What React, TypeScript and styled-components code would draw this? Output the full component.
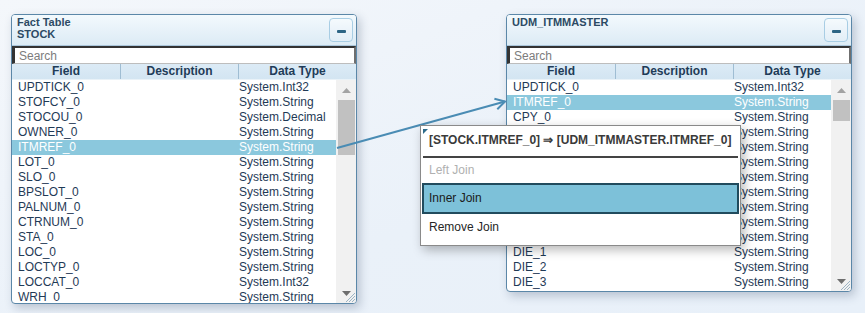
import React from "react";
import styled, { createGlobalStyle } from "styled-components";

const Global = createGlobalStyle`
  html, body { margin: 0; padding: 0; }
  body {
    background: #edf3fa;
    font-family: "Liberation Sans", Arial, sans-serif;
  }
`;

const Canvas = styled.div`
  position: relative;
  width: 865px;
  height: 313px;
  overflow: hidden;
  background: linear-gradient(160deg, #f4f7fb 0%, #eaf1f9 60%, #e8f0f9 100%);
`;

const Panel = styled.div<{ $x: number; $y: number; $h: number }>`
  position: absolute;
  left: ${(p) => p.$x}px;
  top: ${(p) => p.$y}px;
  width: 346px;
  height: ${(p) => p.$h}px;
  box-sizing: border-box;
  border: 1px solid #5b87a8;
  border-radius: 4px;
  background: #fff;
  box-shadow: 3px 4px 10px rgba(40, 60, 90, 0.25);
  display: flex;
  flex-direction: column;
  overflow: hidden;
`;

const Header = styled.div`
  height: 31px;
  box-sizing: border-box;
  border-bottom: 1px solid #a9c5da;
  background: linear-gradient(180deg, #f3f9fd 0%, #dcebf5 100%);
  display: flex;
  align-items: center;
  justify-content: space-between;
  padding: 0 3px 0 5px;
`;

const Title = styled.div`
  align-self: flex-start;
  font-size: 11px;
  font-weight: bold;
  line-height: 12px;
  color: #2c4a64;
  padding-top: 1px;
`;

const MinButton = styled.div`
  width: 24px;
  height: 24px;
  box-sizing: border-box;
  border: 1px solid #a8cde4;
  border-radius: 4px;
  background: linear-gradient(180deg, #f5fafd 0%, #e2eef7 100%);
  display: flex;
  align-items: flex-end;
  justify-content: center;
  padding-bottom: 8px;
`;

const MinBar = styled.div`
  width: 9px;
  height: 3px;
  border-radius: 1px;
  background: #2d6585;
`;

const Search = styled.input`
  display: block;
  width: 100%;
  height: 18px;
  box-sizing: border-box;
  margin: 0;
  border-style: solid;
  border-width: 2px 2px 1px 3px;
  border-color: #333 #6f6f6f #bdbdbd #333;
  padding: 0 0 0 4px;
  font-family: "Liberation Sans", Arial, sans-serif;
  font-size: 12px;
  color: #333;
  background: #fff;
  outline: none;
  &::placeholder { color: #7c7c7c; }
`;

const ColHeader = styled.div`
  height: 16px;
  box-sizing: border-box;
  display: grid;
  grid-template-columns: 108px 118px 1fr;
  background: linear-gradient(180deg, #dcebf6 0%, #d3e5f2 100%);
  border-bottom: 1px solid #e9f2f8;
`;

const ColCell = styled.div<{ $divider?: boolean }>`
  font-size: 12px;
  font-weight: bold;
  line-height: 15px;
  color: #1f3c58;
  text-align: center;
  border-left: ${(p) => (p.$divider ? "1px solid #9fbdd3" : "none")};
`;

const Body = styled.div`
  flex: 1;
  display: flex;
  min-height: 0;
`;

const RowList = styled.div`
  flex: 1;
  overflow: hidden;
`;

const Row = styled.div<{ $sel?: boolean }>`
  height: 15px;
  display: grid;
  grid-template-columns: 108px 119px 1fr;
  font-size: 12px;
  line-height: 15px;
  white-space: nowrap;
  color: ${(p) => (p.$sel ? "#ffffff" : "#1f3a56")};
  background: ${(p) => (p.$sel ? "#8bc8dd" : "transparent")};
`;

const FieldCell = styled.div`
  padding-left: 6px;
`;

const TypeCell = styled.div``;

const Scroll = styled.div`
  width: 20px;
  background: #f1f1f1;
  display: flex;
  flex-direction: column;
  position: relative;
`;

const ArrowBox = styled.div`
  height: 20px;
  display: flex;
  align-items: center;
  justify-content: center;
  padding-left: 1px;
`;

const Thumb = styled.div<{ $h: number }>`
  height: ${(p) => p.$h}px;
  margin: 0 1px 0 2px;
  background: #c1c1c1;
`;

const Spacer = styled.div`
  flex: 1;
`;

const Grip = styled.svg`
  position: absolute;
  right: 1px;
  bottom: 1px;
`;

const Overlay = styled.svg`
  position: absolute;
  left: 0;
  top: 0;
  pointer-events: none;
`;

const Menu = styled.div`
  position: absolute;
  left: 420px;
  top: 125px;
  width: 321px;
  height: 121px;
  box-sizing: border-box;
  border: 1px solid #8a8a8a;
  background: #fff;
  box-shadow: 3px 4px 10px rgba(0, 0, 0, 0.28);
  display: flex;
  flex-direction: column;
`;

const Corner = styled.svg`
  position: absolute;
  left: 2px;
  top: 3px;
`;

const MenuTitle = styled.div`
  padding: 7px 8px 8px 8px;
  font-size: 12px;
  font-weight: bold;
  line-height: 15px;
  color: #3a3a3a;
  white-space: nowrap;
`;

const Sep = styled.div`
  height: 2px;
  margin: 0 2px;
  background: #444;
`;

const MenuItem = styled.div<{ $h: number; $disabled?: boolean }>`
  height: ${(p) => p.$h}px;
  display: flex;
  align-items: center;
  padding-left: 8px;
  font-size: 12px;
  line-height: 15px;
  color: ${(p) => (p.$disabled ? "#b0b0b0" : "#262626")};
`;

const MenuActive = styled.div`
  height: 31px;
  box-sizing: border-box;
  margin: 0 1px;
  border: 2px solid #214b5d;
  background: #7dc1d9;
  display: flex;
  align-items: center;
  padding-left: 5px;
  font-size: 12px;
  line-height: 15px;
  color: #1b1b1b;
`;

type RowData = [string, string];

const leftRows: RowData[] = [
  ["UPDTICK_0", "System.Int32"],
  ["STOFCY_0", "System.String"],
  ["STOCOU_0", "System.Decimal"],
  ["OWNER_0", "System.String"],
  ["ITMREF_0", "System.String"],
  ["LOT_0", "System.String"],
  ["SLO_0", "System.String"],
  ["BPSLOT_0", "System.String"],
  ["PALNUM_0", "System.String"],
  ["CTRNUM_0", "System.String"],
  ["STA_0", "System.String"],
  ["LOC_0", "System.String"],
  ["LOCTYP_0", "System.String"],
  ["LOCCAT_0", "System.Int32"],
  ["WRH_0", "System.String"],
];

const rightRows: RowData[] = [
  ["UPDTICK_0", "System.Int32"],
  ["ITMREF_0", "System.String"],
  ["CPY_0", "System.String"],
  ["TCLCOD_0", "System.String"],
  ["ITMDES1_0", "System.String"],
  ["ITMDES2_0", "System.String"],
  ["ITMDES3_0", "System.String"],
  ["SEAKEY_0", "System.String"],
  ["ITMSTA_0", "System.String"],
  ["EANCOD_0", "System.String"],
  ["DIE_0", "System.String"],
  ["DIE_1", "System.String"],
  ["DIE_2", "System.String"],
  ["DIE_3", "System.String"],
];

const UpTri = () => (
  <svg width="9" height="5" viewBox="0 0 9 5">
    <polygon points="0,5 9,5 4.5,0" fill="#a3a3a3" />
  </svg>
);

const DownTri = () => (
  <svg width="9" height="5" viewBox="0 0 9 5">
    <polygon points="0,0 9,0 4.5,5" fill="#6e6e6e" />
  </svg>
);

const ResizeGrip = () => (
  <Grip width="10" height="10" viewBox="0 0 10 10">
    <line x1="10" y1="1" x2="1" y2="10" stroke="#9db4c4" strokeWidth="1" />
    <line x1="10" y1="4" x2="4" y2="10" stroke="#9db4c4" strokeWidth="1" />
    <line x1="10" y1="7" x2="7" y2="10" stroke="#9db4c4" strokeWidth="1" />
  </Grip>
);

type TableProps = {
  x: number;
  y: number;
  h: number;
  title: React.ReactNode;
  rows: RowData[];
  selected: number;
  thumb: number;
};

const TablePanel = ({ x, y, h, title, rows, selected, thumb }: TableProps) => (
  <Panel $x={x} $y={y} $h={h}>
    <Header>
      <Title>{title}</Title>
      <MinButton>
        <MinBar />
      </MinButton>
    </Header>
    <Search placeholder="Search" readOnly />
    <ColHeader>
      <ColCell>Field</ColCell>
      <ColCell $divider>Description</ColCell>
      <ColCell $divider>Data Type</ColCell>
    </ColHeader>
    <Body>
      <RowList>
        {rows.map(([f, t], i) => (
          <Row key={f + i} $sel={i === selected}>
            <FieldCell>{f}</FieldCell>
            <div />
            <TypeCell>{t}</TypeCell>
          </Row>
        ))}
      </RowList>
      <Scroll>
        <ArrowBox>
          <UpTri />
        </ArrowBox>
        <Thumb $h={thumb} />
        <Spacer />
        <ArrowBox>
          <DownTri />
        </ArrowBox>
        <ResizeGrip />
      </Scroll>
    </Body>
  </Panel>
);

export default function App() {
  return (
    <>
      <Global />
      <Canvas>
        <TablePanel
          x={11}
          y={14}
          h={290}
          title={
            <>
              Fact Table
              <br />
              STOCK
            </>
          }
          rows={leftRows}
          selected={4}
          thumb={55}
        />
        <TablePanel
          x={506}
          y={14}
          h={278}
          title="UDM_ITMMASTER"
          rows={rightRows}
          selected={1}
          thumb={21}
        />
        <Overlay width="865" height="313" viewBox="0 0 865 313">
          <line x1="337" y1="148" x2="505" y2="101.5" stroke="#4a8cb4" strokeWidth="2" />
          <polyline
            points="494.4,98.7 505,101.5 497.3,109.3"
            fill="none"
            stroke="#4a8cb4"
            strokeWidth="2"
          />
        </Overlay>
        <Menu>
          <Corner width="5" height="5" viewBox="0 0 5 5">
            <polygon points="0,0 5,0 0,5" fill="#2d6b8a" />
          </Corner>
          <MenuTitle>[STOCK.ITMREF_0] ⇒ [UDM_ITMMASTER.ITMREF_0]</MenuTitle>
          <Sep />
          <MenuItem $h={25} $disabled>
            Left Join
          </MenuItem>
          <MenuActive>Inner Join</MenuActive>
          <MenuItem $h={26}>Remove Join</MenuItem>
        </Menu>
      </Canvas>
    </>
  );
}
